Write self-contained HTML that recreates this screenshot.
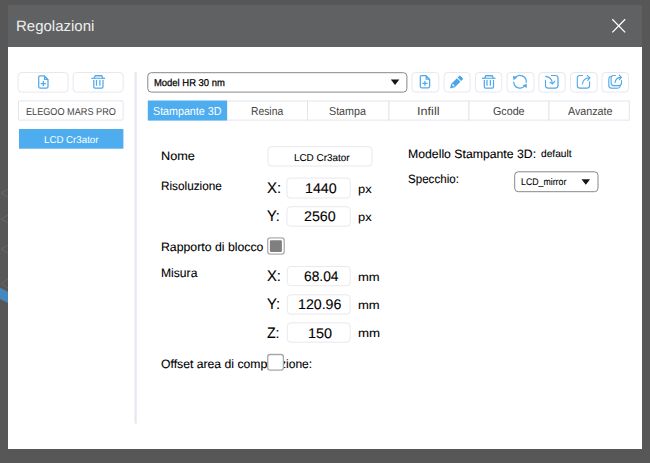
<!DOCTYPE html>
<html lang="it">
<head>
<meta charset="utf-8">
<title>Regolazioni</title>
<style>
html,body{margin:0;padding:0;}
body{width:650px;height:463px;overflow:hidden;background:#575757;position:relative;
  font-family:"Liberation Sans","DejaVu Sans",sans-serif;color:#222;}
*{box-sizing:border-box;}
.abs{position:absolute;}
.t{position:absolute;white-space:nowrap;line-height:1;text-rendering:geometricPrecision;-webkit-text-stroke:0.1px currentColor;transform-origin:0 50%;display:inline-block;}
#tbar{left:8px;top:5px;width:634px;height:43px;background:#606162;}
#body{left:8px;top:47px;width:634px;height:402px;background:#fff;}
.b{-webkit-text-stroke:0.25px currentColor;}
.n{-webkit-text-stroke:0;}
#ov{position:absolute;left:0;top:0;width:650px;height:463px;pointer-events:none;}
</style>
</head>
<body>
<div id="tbar" class="abs"></div>
<div id="body" class="abs"></div>

<svg id="un" viewBox="0 0 650 463" style="position:absolute;left:0;top:0;width:650px;height:463px;">
<!-- left panel -->
<rect x="18.10" y="72.50" width="50.00" height="19.60" rx="3.5" fill="#fff" stroke="#e7e8ef" stroke-width="1"/>
<rect x="73.10" y="72.50" width="50.00" height="19.60" rx="3.5" fill="#fff" stroke="#e7e8ef" stroke-width="1"/>
<rect x="18.50" y="100.90" width="104.60" height="19.20" rx="1" fill="#fff" stroke="#e4e5ec" stroke-width="1"/>
<rect x="19.00" y="129.00" width="104.40" height="19.70" fill="#4eadef"/>
<rect x="134.60" y="72.00" width="2.10" height="351.50" fill="#e6e6ee"/>
<!-- profile dropdown -->
<rect x="147.80" y="72.70" width="259.10" height="19.40" rx="3.5" fill="#fff" stroke="#888" stroke-width="1"/>
<!-- toolbar buttons -->
<rect x="411.90" y="72.50" width="26.90" height="19.50" rx="3.5" fill="#fff" stroke="#e7e8ef" stroke-width="1"/>
<rect x="444.10" y="72.50" width="26.00" height="19.50" rx="3.5" fill="#fff" stroke="#e7e8ef" stroke-width="1"/>
<rect x="475.40" y="72.50" width="26.40" height="19.50" rx="3.5" fill="#fff" stroke="#e7e8ef" stroke-width="1"/>
<rect x="507.00" y="72.50" width="27.00" height="19.50" rx="3.5" fill="#fff" stroke="#e7e8ef" stroke-width="1"/>
<rect x="538.80" y="72.50" width="26.40" height="19.50" rx="3.5" fill="#fff" stroke="#e7e8ef" stroke-width="1"/>
<rect x="570.50" y="72.50" width="26.70" height="19.50" rx="3.5" fill="#fff" stroke="#e7e8ef" stroke-width="1"/>
<rect x="602.00" y="72.50" width="26.60" height="19.50" rx="3.5" fill="#fff" stroke="#e7e8ef" stroke-width="1"/>
<!-- tabs -->
<rect x="227.20" y="101.00" width="80.30" height="19.10" rx="0" fill="#fff" stroke="#e4e5ec" stroke-width="1"/>
<rect x="307.50" y="101.00" width="81.50" height="19.10" rx="0" fill="#fff" stroke="#e4e5ec" stroke-width="1"/>
<rect x="389.00" y="101.00" width="80.00" height="19.10" rx="0" fill="#fff" stroke="#e4e5ec" stroke-width="1"/>
<rect x="469.00" y="101.00" width="80.00" height="19.10" rx="0" fill="#fff" stroke="#e4e5ec" stroke-width="1"/>
<rect x="549.00" y="101.00" width="80.30" height="19.10" rx="0" fill="#fff" stroke="#e4e5ec" stroke-width="1"/>
<rect x="147.80" y="100.50" width="79.20" height="20.10" fill="#4eadef"/>
<!-- form fields -->
<rect x="267.90" y="146.70" width="104.10" height="19.30" rx="3.5" fill="#fff" stroke="#e8e8ee" stroke-width="1"/>
<rect x="286.90" y="178.10" width="63.40" height="19.90" rx="3.5" fill="#fff" stroke="#e8e8ee" stroke-width="1"/>
<rect x="286.90" y="206.70" width="63.40" height="19.50" rx="3.5" fill="#fff" stroke="#e8e8ee" stroke-width="1"/>
<rect x="287.30" y="266.50" width="62.90" height="19.20" rx="3.5" fill="#fff" stroke="#e8e8ee" stroke-width="1"/>
<rect x="287.30" y="294.80" width="62.90" height="19.30" rx="3.5" fill="#fff" stroke="#e8e8ee" stroke-width="1"/>
<rect x="287.30" y="322.90" width="62.90" height="19.30" rx="3.5" fill="#fff" stroke="#e8e8ee" stroke-width="1"/>
<rect x="514.70" y="171.80" width="83.30" height="19.90" rx="3.5" fill="#fff" stroke="#888" stroke-width="1"/>
</svg>

<span class="t n" id="title" style="left:16.09px;top:19.10px;font-size:15.0px;color:#eee;transform:scaleX(0.9995);">Regolazioni</span>
<span class="t n" id="elegoo" style="left:26.15px;top:108.13px;font-size:10.0px;color:#444;transform:scaleX(0.9134);">ELEGOO MARS PRO</span>
<span class="t n" id="lcd1" style="left:44.23px;top:135.53px;font-size:10.0px;color:#fff;transform:scaleX(0.9702);">LCD Cr3ator</span>
<span class="t b" id="model" style="left:154.26px;top:78.63px;font-size:10.0px;color:#000;transform:scaleX(0.9442);">Model HR 30 nm</span>
<span class="t n" id="tab1" style="left:153.02px;top:107.37px;font-size:11.5px;color:#fff;transform:scaleX(0.9297);">Stampante 3D</span>
<span class="t n" id="tab2" style="left:251.10px;top:107.37px;font-size:11.5px;color:#444;transform:scaleX(0.8981);">Resina</span>
<span class="t n" id="tab3" style="left:329.15px;top:107.37px;font-size:11.5px;color:#444;transform:scaleX(0.9314);">Stampa</span>
<span class="t n" id="tab4" style="left:417.11px;top:107.37px;font-size:11.5px;color:#444;transform:scaleX(1.1018);">Infill</span>
<span class="t n" id="tab5" style="left:493.37px;top:107.37px;font-size:11.5px;color:#444;transform:scaleX(0.9316);">Gcode</span>
<span class="t n" id="tab6" style="left:567.76px;top:107.37px;font-size:11.5px;color:#444;transform:scaleX(0.9306);">Avanzate</span>
<span class="t" id="nome" style="left:161.00px;top:150.06px;font-size:12.1px;color:#000;transform:scaleX(1.0499);">Nome</span>
<span class="t" id="nomev" style="left:294.33px;top:153.73px;font-size:10.0px;color:#000;transform:scaleX(0.9874);">LCD Cr3ator</span>
<span class="t" id="ris" style="left:161.07px;top:180.26px;font-size:12.1px;color:#000;transform:scaleX(0.9725);">Risoluzione</span>
<span class="t" id="rx" style="left:266.66px;top:181.12px;font-size:15.1px;color:#000;transform:scaleX(0.9955);">X:</span>
<span class="t" id="rxv" style="left:304.95px;top:181.05px;font-size:14.0px;color:#000;transform:scaleX(1.0172);">1440</span>
<span class="t" id="rxu" style="left:358.37px;top:183.91px;font-size:11.8px;color:#000;transform:scaleX(1.0901);">px</span>
<span class="t" id="ry" style="left:266.92px;top:209.32px;font-size:15.1px;color:#000;transform:scaleX(0.9606);">Y:</span>
<span class="t" id="ryv" style="left:304.24px;top:209.25px;font-size:14.0px;color:#000;transform:scaleX(1.0190);">2560</span>
<span class="t" id="ryu" style="left:358.37px;top:212.11px;font-size:11.8px;color:#000;transform:scaleX(1.0901);">px</span>
<span class="t" id="rap" style="left:160.83px;top:240.86px;font-size:12.1px;color:#000;transform:scaleX(1.0153);">Rapporto di blocco</span>
<span class="t" id="mis" style="left:160.72px;top:266.76px;font-size:12.1px;color:#000;transform:scaleX(1.0031);">Misura</span>
<span class="t" id="mx" style="left:266.66px;top:269.22px;font-size:15.1px;color:#000;transform:scaleX(0.9792);">X:</span>
<span class="t" id="mxv" style="left:303.77px;top:269.15px;font-size:14.0px;color:#000;transform:scaleX(0.9834);">68.04</span>
<span class="t" id="mxu" style="left:358.05px;top:272.01px;font-size:11.8px;color:#000;transform:scaleX(1.1047);">mm</span>
<span class="t" id="my" style="left:266.81px;top:297.42px;font-size:15.1px;color:#000;transform:scaleX(0.9757);">Y:</span>
<span class="t" id="myv" style="left:298.32px;top:297.35px;font-size:14.0px;color:#000;transform:scaleX(1.0131);">120.96</span>
<span class="t" id="myu" style="left:358.05px;top:300.21px;font-size:11.8px;color:#000;transform:scaleX(1.1047);">mm</span>
<span class="t" id="mz" style="left:267.33px;top:325.72px;font-size:15.1px;color:#000;transform:scaleX(0.9323);">Z:</span>
<span class="t" id="mzv" style="left:308.17px;top:325.55px;font-size:14.0px;color:#000;transform:scaleX(1.0313);">150</span>
<span class="t" id="mzu" style="left:357.77px;top:328.01px;font-size:11.8px;color:#000;transform:scaleX(1.1236);">mm</span>
<span class="t" id="off" style="left:161.06px;top:358.46px;font-size:12.1px;color:#000;transform:scaleX(1.0087);">Offset area di comp</span>
<span class="t" id="off2" style="left:266.38px;top:358.46px;font-size:12.1px;color:#000;transform:scaleX(0.9169);">osiz</span>
<span class="t" id="off3" style="left:285.96px;top:358.46px;font-size:12.1px;color:#000;transform:scaleX(0.9978);">ione:</span>
<span class="t" id="modl" style="left:408.38px;top:147.76px;font-size:12.1px;color:#000;transform:scaleX(1.0133);">Modello Stampante 3D:</span>
<span class="t" id="def" style="left:540.96px;top:149.87px;font-size:10.2px;color:#000;transform:scaleX(1.0007);">default</span>
<span class="t" id="spec" style="left:408.22px;top:172.86px;font-size:12.1px;color:#000;transform:scaleX(0.9584);">Specchio:</span>
<span class="t" id="lcdm" style="left:520.86px;top:177.77px;font-size:9.6px;color:#000;transform:scaleX(0.9145);">LCD_mirror</span>

<svg id="ov" viewBox="0 0 650 463">
  <!-- checkboxes (drawn over the labels) -->
  <rect x="267.7" y="237.9" width="16.5" height="16.2" rx="2.6" fill="#fff" stroke="#adadad" stroke-width="1.3"/>
  <rect x="269.9" y="240.2" width="12" height="11.8" rx="1.3" fill="#7f7f7f"/>
  <rect x="267.7" y="354.5" width="15.7" height="15.6" rx="2.4" fill="#fff" stroke="#a8a8a8" stroke-width="1.3"/>
  <!-- background decoration on the left strip -->
  <polygon points="0,287.7 8,291.8 8,303.1 0,299" fill="#4488bd"/>
  <g stroke="#686868" stroke-width="0.9" fill="none"><path d="M8 189 L1 193 L8 197"/><path d="M8 215 L1 219 L8 223"/><path d="M8 245 L1 249 L8 253"/><path d="M8 279 L1 283.5 L8 288"/></g>
  <!-- close X -->
  <path d="M612.3 19.3 L625.2 32.4 M625.2 19.3 L612.3 32.4" stroke="#fff" stroke-width="1.3" fill="none"/>
  <!-- dropdown arrows -->
  <polygon points="390.8,79.6 399.3,79.6 395.05,85.1" fill="#151515"/>
  <polygon points="581.5,179.2 590.1,179.2 585.8,184.7" fill="#151515"/>

  <g fill="none" stroke="#4fa9ea" stroke-width="1.25" stroke-linejoin="round" stroke-linecap="round">
    <!-- new file (left) -->
    <g id="ic-new">
      <path d="M39.9 75.85 H44.3 L48 79.7 V86.8 Q48 88 46.8 88 H39.9 Q38.7 88 38.7 86.8 V77.05 Q38.7 75.85 39.9 75.85 Z"/>
      <path d="M44.5 76.3 V79.5 H47.6 Z" stroke-width="1.1"/>
      <path d="M40.7 83.5 H46 M43.35 81.1 V85.9" stroke-linecap="butt"/>
    </g>
    <!-- trash (left) -->
    <g id="ic-trash" stroke-linecap="butt">
      <path d="M91.5 78.3 H105"/>
      <path d="M94.2 78.3 L95.2 75.7 H101.8 L102.8 78.3" fill="#cfe6f8"/>
      <path d="M93.8 80 V86.7 Q93.8 88 95.1 88 H101.7 Q103 88 103 86.7 V80"/>
      <path d="M96.5 80 V85.8 M99.9 80 V85.8"/>
    </g>
    <!-- new file (toolbar) -->
    <g transform="translate(381.6,-0.2)">
      <path d="M39.9 75.85 H44.3 L48 79.7 V86.8 Q48 88 46.8 88 H39.9 Q38.7 88 38.7 86.8 V77.05 Q38.7 75.85 39.9 75.85 Z"/>
      <path d="M44.5 76.3 V79.5 H47.6 Z" stroke-width="1.1"/>
      <path d="M40.7 83.5 H46 M43.35 81.1 V85.9" stroke-linecap="butt"/>
    </g>
    <!-- trash (toolbar) -->
    <g transform="translate(390.5,0)" stroke-linecap="butt">
      <path d="M91.5 78.3 H105"/>
      <path d="M94.2 78.3 L95.2 75.7 H101.8 L102.8 78.3" fill="#cfe6f8"/>
      <path d="M93.8 80 V86.7 Q93.8 88 95.1 88 H101.7 Q103 88 103 86.7 V80"/>
      <path d="M96.5 80 V85.8 M99.9 80 V85.8"/>
    </g>
    <!-- refresh -->
    <path d="M526.3 82.3 A6.3 6.3 0 0 0 514.9 78.1" stroke-width="1.2"/>
    <path d="M513.7 82.1 A6.3 6.3 0 0 0 525.1 85.5" stroke-width="1.2"/>
    <!-- import -->
    <path d="M551.5 75.5 H555.4 Q558 75.5 558 78.1 V85.5 Q558 88.1 555.4 88.1 H548.1 Q545.5 88.1 545.5 85.5 V80.2" stroke-width="1.1"/>
    <path d="M558.3 78 V85.6" stroke-width="1.5" stroke="#8cc6f2"/>
    <path d="M545.6 76.4 Q551.8 77 552.5 83.6 M550 82.3 L552.6 84 L554.9 81.1" stroke-width="1.1"/>
    <!-- export -->
    <path d="M582.6 75.5 H579.9 Q577.3 75.5 577.3 78.1 V85.5 Q577.3 88.1 579.9 88.1 H587 Q589.6 88.1 589.6 85.5 V81.8" stroke-width="1.1"/>
    <path d="M582.4 84 Q583.2 78.3 588.9 77.8 M587.2 75.3 L590 77.8 L587.7 80.3" stroke-width="1.1"/>
    <!-- export all -->
    <path d="M615.4 75.5 H613.7 Q611.1 75.5 611.1 78.1 V83 Q611.1 85.6 613.7 85.6 H618.9 Q621.5 85.6 621.5 83 V80.5" stroke-width="1.1"/>
    <path d="M610.4 76.5 Q608.8 77.3 608.8 79.5 V85.5 Q608.8 88.1 611.4 88.1 H617.4 Q619.8 88.1 620.4 86.1" stroke-width="1.1"/>
    <path d="M611.6 87 H618.6" stroke="#cfe6f8" stroke-width="1.2"/>
    <path d="M615 82.7 Q615.6 77.8 620.6 77.4 M619.2 75.2 L621.4 77.4 L619.5 79.6" stroke-width="1.1"/>
  </g>
  <g fill="#4ba6e9" stroke="none">
    <!-- refresh arrowheads -->
    <polygon points="512.9,76 517.3,76.9 513.6,80.3"/>
    <polygon points="527,84 526.5,87.9 522.6,85.2"/>
    <!-- pencil -->
    <g transform="translate(450,88.6) rotate(-45)">
      <path d="M0 0 L4.3 -2.5 H12.3 V2.5 H4.3 Z"/>
      <path d="M13.2 -2.5 H15.4 Q16.4 -2.5 16.4 -1.5 V1.5 Q16.4 2.5 15.4 2.5 H13.2 Z"/>
      <ellipse cx="4.7" cy="0" rx="0.7" ry="1.5" fill="#fff"/>
    </g>
  </g>
</svg>
</body>
</html>
